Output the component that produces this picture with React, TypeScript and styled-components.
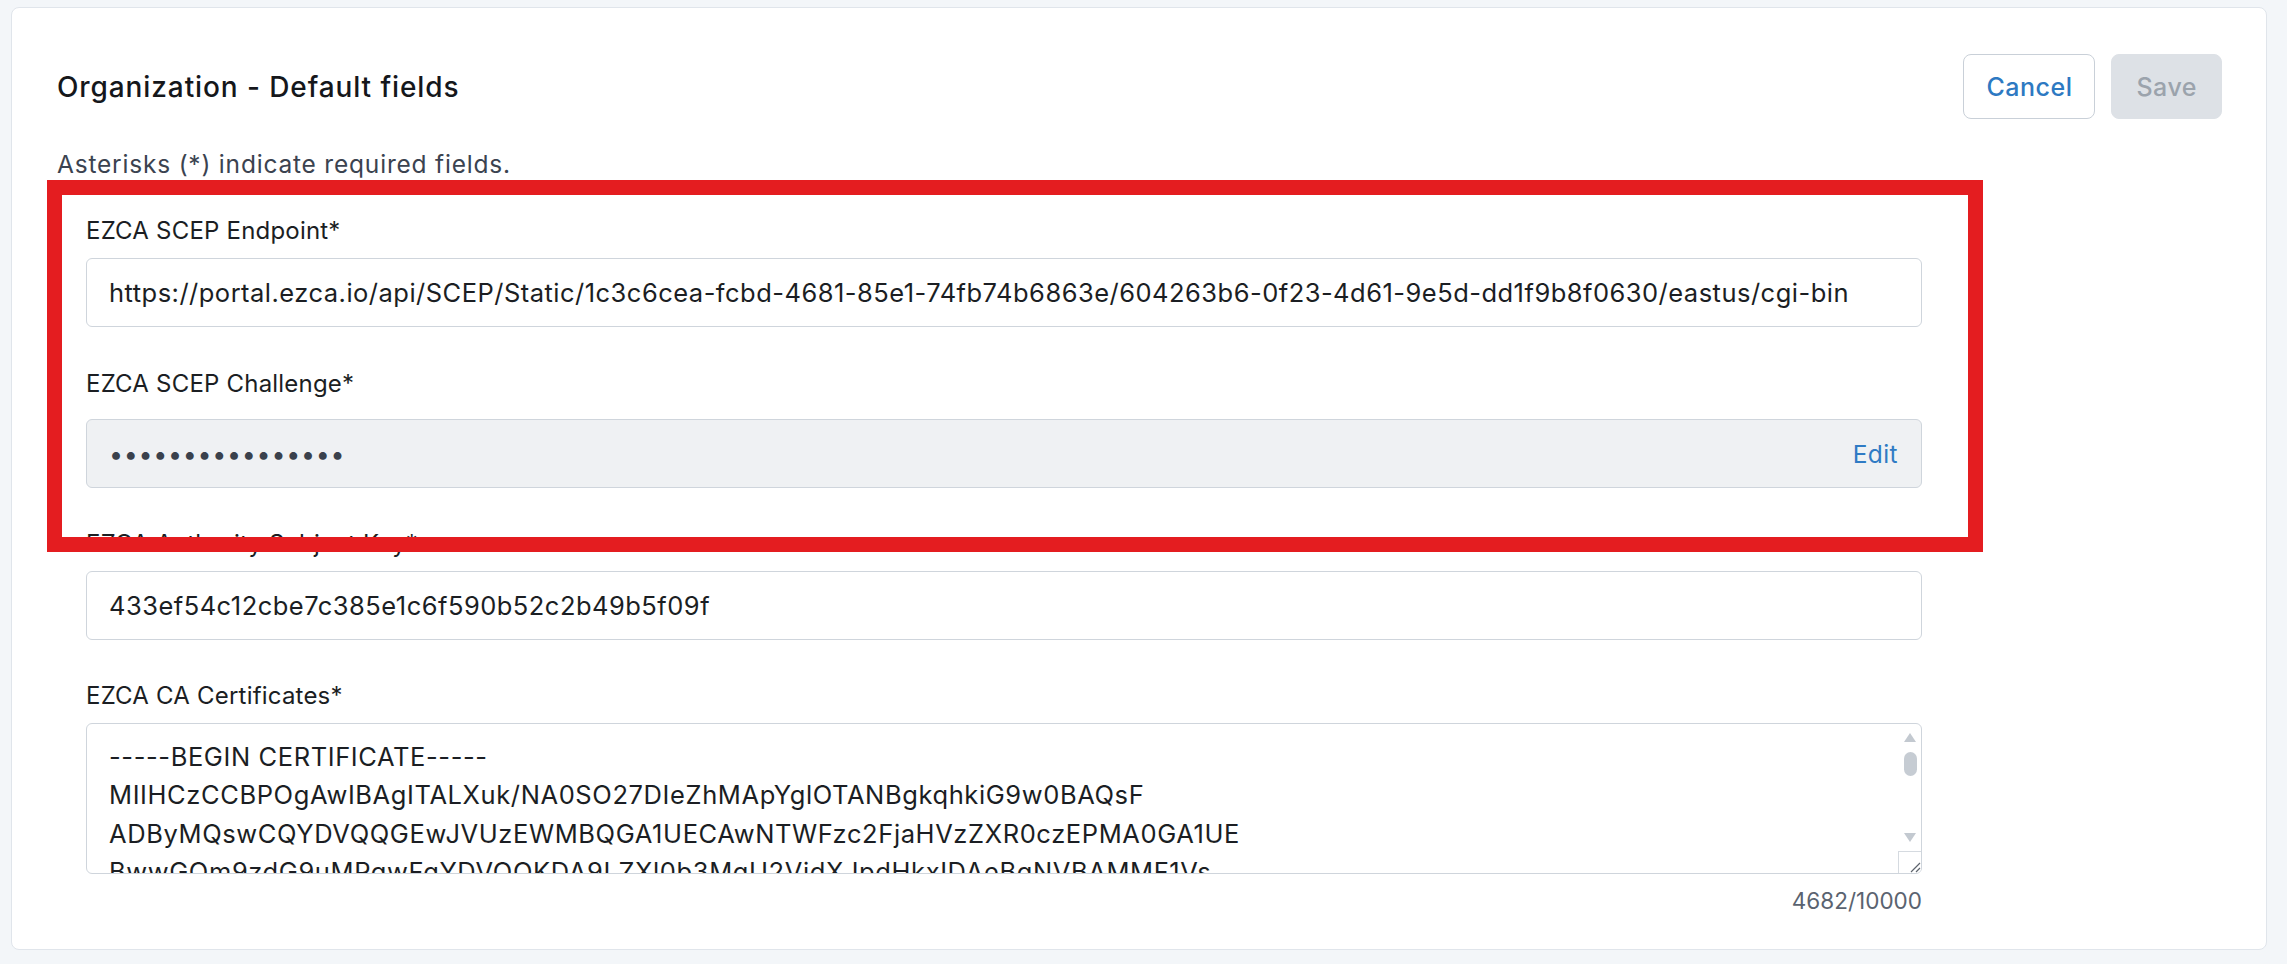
import styled, { createGlobalStyle } from 'styled-components'

const GlobalStyle = createGlobalStyle`
  html, body {
    margin: 0;
    padding: 0;
    background: #f3f6f9;
  }
  body {
    font-family: Inter, 'Noto Sans', 'Liberation Sans', sans-serif;
    color: #1b1e23;
  }
  * {
    box-sizing: border-box;
  }
`

const certLines = [
  '-----BEGIN CERTIFICATE-----',
  'MIIHCzCCBPOgAwIBAgITALXuk/NA0SO27DIeZhMApYglOTANBgkqhkiG9w0BAQsF',
  'ADByMQswCQYDVQQGEwJVUzEWMBQGA1UECAwNTWFzc2FjaHVzZXR0czEPMA0GA1UE',
  'BwwGQm9zdG9uMRgwFgYDVQQKDA9LZXl0b3MgU2VjdXJpdHkxIDAeBgNVBAMMF1Vs',
  'dGltYXRlIFNDRVAgSXNzdWluZyBDQTAeFw0yMzA0MTcxNzQ4MzJaFw0yODA0MTcx',
  'NzQ4MzJaMHIxCzAJBgNVBAYTAlVTMRYwFAYDVQQIDA1NYXNzYWNodXNldHRzMQ8w',
  'DQYDVQQHDAZCb3N0b24xGDAWBgNVBAoMD0tleXRvcyBTZWN1cml0eTEgMB4GA1UE',
]

const filler = 'QUJDREVGR0hJSktMTU5PUFFSU1RVVldYWVphYmNkZWZnaGlqa2xtbm9wcXJzdHV2'
const certText = [
  ...certLines,
  ...Array.from({ length: 60 }, (_, i) => filler.slice(i % 9) + filler.slice(0, i % 9)),
  '-----END CERTIFICATE-----',
].join('\n')

function App() {
  return (
    <>
      <GlobalStyle />
      <Page>
        <Card>
          <Header>
            <Title>Organization - Default fields</Title>
            <Actions>
              <ActionButton $variant='outline'>Cancel</ActionButton>
              <ActionButton $variant='disabled' disabled>
                Save
              </ActionButton>
            </Actions>
          </Header>

          <Body>
            <Hint>Asterisks (*) indicate required fields.</Hint>

            <Form>
              <Field $gap={39}>
                <Label>EZCA SCEP Endpoint*</Label>
                <TextInput
                  readOnly
                  value='https://portal.ezca.io/api/SCEP/Static/1c3c6cea-fcbd-4681-85e1-74fb74b6863e/604263b6-0f23-4d61-9e5d-dd1f9b8f0630/eastus/cgi-bin'
                />
              </Field>

              <Field $gap={38}>
                <Label $space={17}>EZCA SCEP Challenge*</Label>
                <MaskedBox>
                  <Dots>{'•'.repeat(16)}</Dots>
                  <EditLink>Edit</EditLink>
                </MaskedBox>
              </Field>

              <Field $gap={38}>
                <Label>EZCA Authority Subject Key*</Label>
                <TextInput readOnly value='433ef54c12cbe7c385e1c6f590b52c2b49b5f09f' />
              </Field>

              <Field $gap={0}>
                <Label>EZCA CA Certificates*</Label>
                <AreaWrap>
                  <CertArea readOnly value={certText} />
                  <ScrollBar>
                    <Arrow $dir='up' />
                    <Thumb />
                    <Arrow $dir='down' />
                  </ScrollBar>
                  <ResizeCorner>
                    <svg width='14' height='14' viewBox='0 0 14 14'>
                      <path d='M13 4 L4 13 M13 9 L9 13' stroke='#5d646d' strokeWidth='1.2' />
                    </svg>
                  </ResizeCorner>
                </AreaWrap>
                <Counter>4682/10000</Counter>
              </Field>
            </Form>
          </Body>
        </Card>

        <Highlight />
      </Page>
    </>
  )
}

export default App

const Page = styled.div`
  position: relative;
  height: 100vh;
  padding: 7px 20px 14px 11px;
`

const Card = styled.div`
  height: 100%;
  background: #ffffff;
  border: 1px solid #e0e5eb;
  border-radius: 8px;
  display: flex;
  flex-direction: column;
`

const Header = styled.div`
  display: flex;
  align-items: center;
  justify-content: space-between;
  padding: 46px 44px 24px 45px;
  border-radius: 8px;
`

const Title = styled.h2`
  margin: 0;
  font-size: 28px;
  letter-spacing: 0.9px;
  font-weight: 500;
  color: #15171b;
`

const Actions = styled.div`
  display: flex;
  gap: 16px;
`

const ActionButton = styled.button<{ $variant: 'outline' | 'disabled' }>`
  height: 65px;
  padding: 0 ${(p) => (p.$variant === 'outline' ? 22 : 24)}px;
  border-radius: 8px;
  font-family: inherit;
  font-size: 25px;
  letter-spacing: 0.5px;
  font-weight: 500;
  cursor: pointer;
  border: 1px solid ${(p) => (p.$variant === 'outline' ? '#c9d0d8' : '#dde1e6')};
  background: ${(p) => (p.$variant === 'outline' ? '#ffffff' : '#dde1e6')};
  color: ${(p) => (p.$variant === 'outline' ? '#2d79c2' : '#9ba3ac')};

  &:disabled {
    cursor: default;
  }
`

const Body = styled.div`
  padding: 3px 45px 0 45px;
`

const Hint = styled.p`
  margin: 0;
  font-size: 24.5px;
  letter-spacing: 0.8px;
  line-height: 36px;
  color: #3b4350;
`

const Form = styled.div`
  width: 1836px;
  margin: 31px 0 0 29px;
`

const Field = styled.div<{ $gap: number }>`
  display: flex;
  flex-direction: column;
  margin-bottom: ${(p) => p.$gap}px;
`

const Label = styled.label<{ $space?: number }>`
  font-size: 24px;
  letter-spacing: 0.2px;
  line-height: 36px;
  margin-bottom: ${(p) => p.$space ?? 9}px;
  color: #1b1e23;
`

const TextInput = styled.input`
  height: 69px;
  width: 100%;
  padding: 0 22px;
  border: 1px solid #cfd5dc;
  border-radius: 6px;
  font-family: inherit;
  font-size: 25.5px;
  letter-spacing: 0.48px;
  color: #1b1e23;
  background: #ffffff;
  outline: none;
`

const MaskedBox = styled.div`
  height: 69px;
  display: flex;
  align-items: center;
  justify-content: space-between;
  padding: 0 23px 0 22px;
  border: 1px solid #cfd5dc;
  border-radius: 6px;
  background: #eff1f3;
`

const Dots = styled.span`
  font-size: 25px;
  letter-spacing: 0.7px;
  color: #3a414c;
`

const EditLink = styled.button`
  border: none;
  background: none;
  padding: 0;
  font-family: inherit;
  font-size: 24.5px;
  letter-spacing: 0.4px;
  color: #2f7bc4;
  cursor: pointer;
`

const AreaWrap = styled.div`
  position: relative;
  height: 151px;
`

const CertArea = styled.textarea`
  display: block;
  height: 100%;
  width: 100%;
  padding: 14px 40px 14px 22px;
  border: 1px solid #cfd5dc;
  border-radius: 6px;
  font-family: inherit;
  font-size: 25.5px;
  letter-spacing: 0.6px;
  line-height: 38.4px;
  color: #1b1e23;
  resize: none;
  outline: none;
  white-space: pre;
  overflow: hidden;
`

const ScrollBar = styled.div`
  position: absolute;
  top: 1px;
  right: 1px;
  bottom: 24px;
  width: 22px;
  display: flex;
  flex-direction: column;
  align-items: center;
  padding-top: 9px;
`

const Arrow = styled.span<{ $dir: 'up' | 'down' }>`
  width: 0;
  height: 0;
  border-left: 6px solid transparent;
  border-right: 6px solid transparent;
  ${(p) =>
    p.$dir === 'up'
      ? 'border-bottom: 9px solid #c3c9d0;'
      : 'border-top: 9px solid #c3c9d0; margin-top: auto; margin-bottom: 8px;'}
`

const Thumb = styled.span`
  margin-top: 10px;
  width: 13px;
  height: 24px;
  border-radius: 7px;
  background: #c6ccd3;
`

const ResizeCorner = styled.span`
  position: absolute;
  right: 1px;
  bottom: 1px;
  width: 23px;
  height: 22px;
  display: flex;
  align-items: flex-end;
  justify-content: flex-end;
  border-left: 1px solid #d5dae0;
  border-top: 1px solid #d5dae0;
  border-bottom-right-radius: 5px;
  background: #ffffff;
`

const Counter = styled.div`
  margin-top: 9px;
  text-align: right;
  font-size: 22.5px;
  line-height: 36px;
  color: #5a6370;
`

const Highlight = styled.div`
  position: absolute;
  top: 180px;
  left: 47px;
  width: 1936px;
  height: 372px;
  border: 15px solid #e41d20;
  pointer-events: none;
`
